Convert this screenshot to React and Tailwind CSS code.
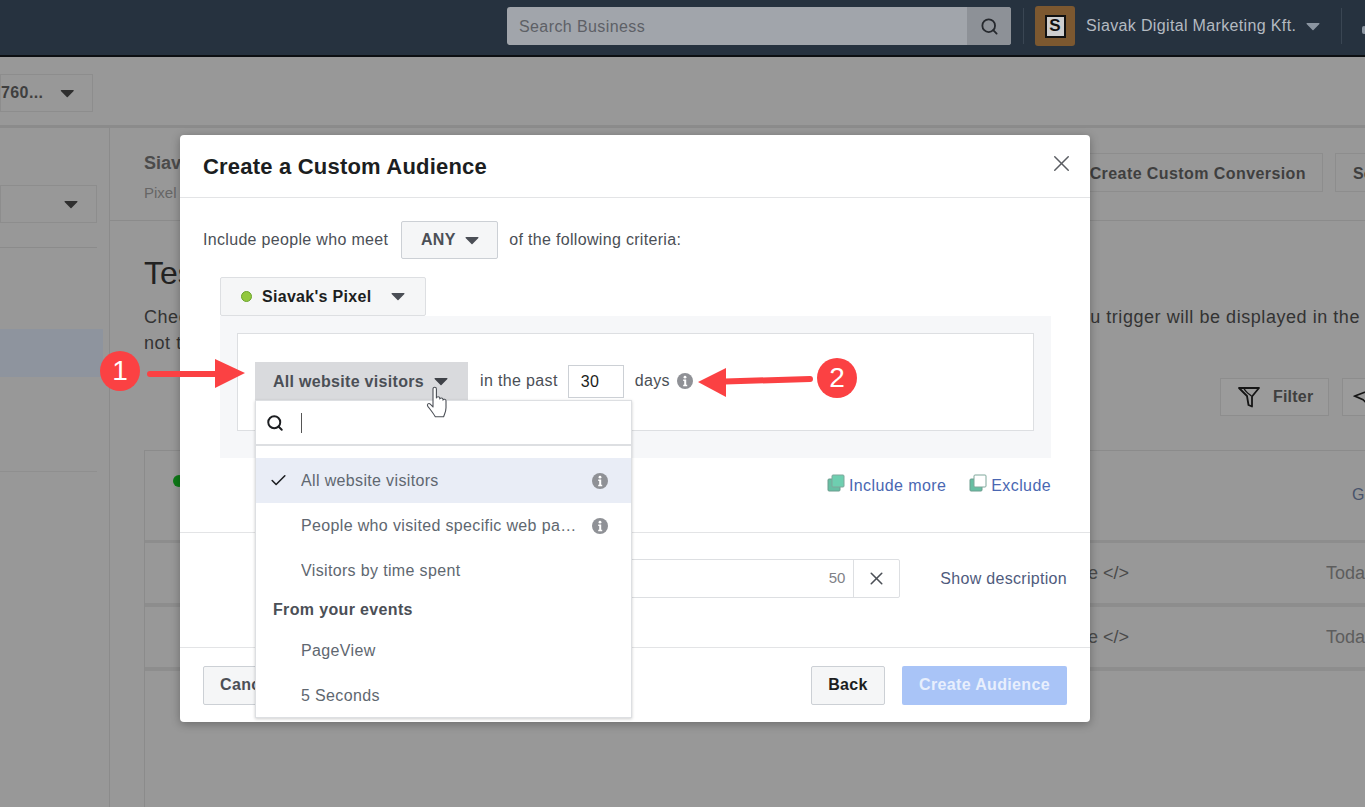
import React from "react";
import { Search, X, Check } from "lucide-react";

const font = { fontFamily: '"Liberation Sans", Arial, sans-serif' };

function Caret({ className = "" }) {
  return (
    <svg viewBox="0 0 14 9" className={className} fill="currentColor">
      <path d="M1 1h12a.6.6 0 0 1 .4 1L7.5 8a.7.7 0 0 1-1 0L.6 2A.6.6 0 0 1 1 1z" />
    </svg>
  );
}

function Info({ className = "" }) {
  return (
    <svg viewBox="0 0 16 16" className={className}>
      <circle cx="8" cy="8" r="8" fill="#8f9196" />
      <circle cx="8" cy="4.2" r="1.4" fill="#fff" />
      <path d="M6.2 6.6h3v5.2h1v1.4H6.2v-1.4h1V8H6.2z" fill="#fff" />
    </svg>
  );
}

function Stack({ className = "", front = "#6ecfb0" }) {
  return (
    <svg viewBox="0 0 18 18" className={className}>
      <rect x="1" y="5" width="12" height="12" rx="1" fill="#67bfa3" stroke="#6c9c8e" />
      <rect x="5" y="1" width="12" height="12" rx="1" fill={front} stroke="#7fa79b" />
    </svg>
  );
}

function Row({ children, info, selected }) {
  return (
    <div className={`h-[45px] flex items-center pl-[45px] pr-[23px] text-[16px] tracking-[0.35px] text-[#606770] relative ${selected ? "bg-[#e9edf6]" : ""}`}>
      {selected && <Check className="absolute left-[13px] top-[13px] w-[19px] h-[19px] text-[#1c1e21]" strokeWidth={2} />}
      <span className="flex-1 truncate">{children}</span>
      {info && <Info className="w-[16px] h-[16px] ml-[14px] shrink-0" />}
    </div>
  );
}

function TableRow() {
  return (
    <div className="h-[64px] border-b-[4px] border-[#8d8d8d] flex items-center justify-end text-[18px] text-[#4a4a4a]">
      <span className="mr-[197px]">Code &lt;/&gt;</span>
      <span className="w-[39px] overflow-hidden text-[#5d5d5d]">Today</span>
    </div>
  );
}

export default function App() {
  return (
    <div style={font} className="relative w-[1365px] h-[807px] overflow-hidden bg-[#989898]">
      {/* top bar */}
      <div className="h-[57px] bg-[#26323f] border-b-2 border-[#0c0f12] flex items-center pl-[507px] pb-[3px]">
        <div className="w-[504px] h-[38px] shrink-0 rounded-[3px] bg-[#a1a5ab] flex overflow-hidden">
          <div className="flex-1 pl-[12px] pt-[2px] flex items-center text-[16px] tracking-[0.4px] text-[#5d6066]">Search Business</div>
          <div className="w-[44px] bg-[#8d9197] flex items-center justify-center">
            <Search className="w-[19px] h-[19px] text-[#26292e]" strokeWidth={2.3} />
          </div>
        </div>
        <div className="w-px h-[36px] shrink-0 bg-[#3a4653] ml-[12px]" />
        <div className="w-[40px] h-[40px] shrink-0 ml-[11px] rounded-[3px] bg-[#7c5830] flex items-center justify-center">
          <div className="w-[21px] h-[23px] bg-[#cfcfcf] border-2 border-[#111] flex items-center justify-center text-[17px] font-bold text-[#111]">S</div>
        </div>
        <span className="ml-[11px] text-[16px] tracking-[0.35px] text-[#b4bac1] whitespace-nowrap">Siavak Digital Marketing Kft.</span>
        <Caret className="w-[14px] h-[9px] shrink-0 ml-[10px] text-[#8b95a1]" />
        <div className="w-px h-[36px] shrink-0 bg-[#3a4653] ml-[21px]" />
        <div className="w-[4px] h-[8px] ml-[20px] mt-[8px] bg-[#8b95a1] rounded-sm shrink-0" />
      </div>

      {/* sub bar */}
      <div className="h-[71px] border-b-[3px] border-[#8b8b8b] flex items-center pt-[4px]">
        <div className="w-[93px] h-[38px] border border-[#8d8d8d] flex items-center justify-end pr-[17px] gap-[17px] text-[16px] font-bold tracking-[0.4px] text-[#3f3f3f]">
          <span>760...</span>
          <Caret className="w-[15px] h-[9px] text-[#2f2f2f]" />
        </div>
      </div>

      <div className="flex h-[679px]">
        {/* side column */}
        <div className="w-[110px] border-r border-[#8b8b8b] shrink-0 pt-[57px]">
          <div className="w-[97px] h-[38px] border border-[#8d8d8d] flex items-center justify-end pr-[18px]">
            <Caret className="w-[14px] h-[9px] text-[#2f2f2f]" />
          </div>
          <div className="w-[97px] border-b border-[#8b8b8b] mt-[24px]" />
          <div className="w-[103px] h-[48px] bg-[#8e949e] mt-[81px]" />
          <div className="w-[97px] border-b border-[#8f8f8f] mt-[94px]" />
        </div>

        {/* main column */}
        <div className="flex-1 min-w-0">
          <div className="h-[93px] border-b border-[#8b8b8b] pl-[34px] pt-[25px] flex justify-between">
            <div>
              <div className="text-[18px] font-bold text-[#4b4b4b] leading-[20px]">Siav</div>
              <div className="text-[15px] text-[#666] mt-[10px] leading-[20px]">Pixel</div>
            </div>
            <div className="flex gap-[12px] -mr-[60px]">
              <div className="w-[260px] h-[39px] border border-[#8d8d8d] flex items-center justify-end pr-[16px] pt-[2px] text-[16px] font-bold tracking-[0.42px] text-[#3f3f3f]">Create Custom Conversion</div>
              <div className="w-[90px] h-[39px] border border-[#8d8d8d] pl-[17px] pt-[2px] flex items-center text-[16px] font-bold text-[#3f3f3f]">Set up</div>
            </div>
          </div>
          <div className="pl-[34px]">
            <div className="text-[32px] leading-[40px] mt-[32px] text-[#222]">Test Events</div>
            <div className="flex justify-between pr-[5px] mt-[11px] text-[18px] tracking-[0.55px] leading-[26px] text-[#333] whitespace-nowrap">
              <span>Check</span>
              <span>u trigger will be displayed in the</span>
            </div>
            <div className="text-[18px] tracking-[0.55px] leading-[26px] text-[#333]">not triggered</div>
            <div className="flex justify-end gap-[13px] mt-[22px] -mr-[39px]">
              <div className="w-[109px] h-[38px] border border-[#8d8d8d] bg-[#9b9b9b] flex items-center pl-[16px] gap-[12px] text-[16px] font-bold tracking-[0.2px] text-[#3f3f3f]">
                <svg viewBox="0 0 24 24" className="w-[24px] h-[24px]" fill="none" stroke="#151515" strokeWidth="1.8" strokeLinejoin="round">
                  <path d="M2 3h20l-7 8.500V21.500l-3.500-1.500-1.500-9z" />
                  <path d="M7 3.500c1.500 3.500 5 5.500 7.500 7.500" strokeWidth="1.300" />
                </svg>
                Filter
              </div>
              <div className="w-[62px] h-[38px] border border-[#8d8d8d] bg-[#9b9b9b] flex items-center pl-[10px]">
                <svg viewBox="0 0 24 24" className="w-[22px] h-[22px]" fill="none" stroke="#151515" strokeWidth="1.8">
                  <path d="M2 11 22 3l-5 18-6-6z" />
                </svg>
              </div>
            </div>
            <div className="mt-[34px] border-l border-t border-[#8b8b8b] h-[357px]">
              <div className="h-[92px] border-b-[3px] border-[#8d8d8d] flex justify-between pl-[28px] pt-[24px]">
                <div className="w-[12px] h-[12px] rounded-full bg-[#0d7a17]" />
                <span className="mt-[8px] w-[13px] overflow-hidden text-[16px] text-[#48536b]">Go</span>
              </div>
              <TableRow />
              <TableRow />
            </div>
          </div>
        </div>
      </div>

      {/* dialog */}
      <div className="absolute left-[180px] top-[135px] w-[910px] h-[587px] bg-white rounded-[4px] shadow-[0_2px_10px_rgba(0,0,0,0.3)]">
        <div className="h-[63px] border-b border-[#e3e4e6] pl-[23px] pr-[15px] flex items-center justify-between">
          <span className="text-[22px] font-bold tracking-[0.2px] text-[#1c1e21]">Create a Custom Audience</span>
          <X className="w-[27px] h-[27px] text-[#5a5d62] -mt-[6px]" strokeWidth={1.3} />
        </div>

        <div className="h-[335px] border-b border-[#e3e4e6] pt-[23px]">
          <div className="pl-[23px] flex items-center text-[16px] tracking-[0.32px] text-[#4b4f56]">
            <span>Include people who meet</span>
            <div className="ml-[13px] w-[97px] h-[38px] bg-[#f5f6f7] border border-[#ccd0d5] rounded-[2px] flex items-center justify-center gap-[9px] font-bold text-[#4b4f56]">
              ANY
              <Caret className="w-[14px] h-[9px] text-[#4b4f56]" />
            </div>
            <span className="ml-[11px]">of the following criteria:</span>
          </div>

          <div className="ml-[40px] mt-[18px] w-[206px] h-[39px] bg-[#f5f6f7] border border-[#dddfe2] rounded-[2px] flex items-center pl-[20px] text-[16px] font-bold tracking-[0.3px] text-[#1c1e21]">
            <span className="w-[11px] h-[11px] rounded-full bg-[#92c83e] border border-[#6aa32c]" />
            <span className="ml-[10px]">Siavak's Pixel</span>
            <Caret className="w-[14px] h-[9px] ml-[20px] text-[#4b4f56]" />
          </div>

          <div className="ml-[40px] w-[831px] h-[142px] bg-[#f6f7f9] p-[17px]">
            <div className="h-[98px] w-[797px] bg-white border border-[#dddfe2] pl-[17px] pt-[28px] relative">
              <div className="flex items-center text-[16px] tracking-[0.35px] text-[#4b4f56]">
                <div className="w-[213px] h-[38px] pt-[1px] bg-[#d9dadd] flex items-center pl-[18px] font-bold tracking-[0.3px]">
                  All website visitors
                  <Caret className="w-[14px] h-[9px] ml-[10px] text-[#3f4248]" />
                </div>
                <span className="ml-[12px]">in the past</span>
                <div className="ml-[10px] mt-[1px] w-[56px] h-[33px] border border-[#ccd0d5] flex items-center pl-[12px] text-[#1c1e21]">30</div>
                <span className="ml-[11px]">days</span>
                <Info className="w-[16px] h-[16px] ml-[7px]" />
              </div>

              {/* audience dropdown */}
              <div className="absolute left-[17px] top-[66px] w-[377px] h-[318px] bg-white border border-[#dddfe2] shadow-[0_1px_3px_rgba(0,0,0,0.2)] z-10">
                <div className="h-[45px] border-b-2 border-[#dddfe2] flex items-center pl-[10px]">
                  <Search className="w-[18px] h-[18px] text-[#1c1e21]" strokeWidth={2.6} />
                  <span className="w-px h-[20px] bg-[#555] ml-[17px]" />
                </div>
                <div className="pt-[12px]">
                  <Row selected info>All website visitors</Row>
                  <Row info>People who visited specific web pages</Row>
                  <Row>Visitors by time spent</Row>
                  <div className="h-[35px] pl-[17px] pt-[5px] text-[16px] font-bold tracking-[0.35px] text-[#4b4f56]">From your events</div>
                  <Row>PageView</Row>
                  <Row>5 Seconds</Row>
                </div>
              </div>
            </div>
          </div>

          <div className="h-[74px] flex items-start justify-end pr-[39px] pt-[19px] text-[16px] leading-[18px] tracking-[0.4px] text-[#4a67b2]">
            <Stack className="w-[18px] h-[18px] mr-[4px] -mt-[3px]" />
            <span>Include more</span>
            <Stack className="w-[18px] h-[18px] ml-[23px] mr-[4px] -mt-[3px]" front="#ffffff" />
            <span>Exclude</span>
          </div>
        </div>

        <div className="h-[115px] border-b border-[#e3e4e6] pt-[26px] pr-[23px] flex items-start justify-end">
          <div className="w-[500px] h-[39px] border border-[#dddfe2] rounded-[2px] flex items-center justify-end text-[15px] text-[#7f8287]">
            <span className="mr-[8px]">50</span>
            <div className="w-[46px] h-full border-l border-[#dddfe2] flex items-center justify-center">
              <X className="w-[21px] h-[21px] text-[#4b4f56]" strokeWidth={1.8} />
            </div>
          </div>
          <span className="ml-[40px] mt-[8px] text-[16px] tracking-[0.3px] text-[#4f5b7d]">Show description</span>
        </div>

        <div className="h-[74px] pl-[23px] pr-[23px] flex items-center">
          <div className="w-[90px] h-[39px] bg-[#f5f6f7] border border-[#ccd0d5] rounded-[2px] pl-[16px] flex items-center text-[16px] font-bold tracking-[0.35px] text-[#4b4f56]">Cancel</div>
          <div className="ml-auto w-[74px] h-[39px] bg-[#f5f6f7] border border-[#ccd0d5] rounded-[2px] flex items-center justify-center text-[16px] font-bold tracking-[0.35px] text-[#1c1e21]">Back</div>
          <div className="ml-[17px] w-[165px] h-[39px] bg-[#a9c4f7] rounded-[2px] flex items-center justify-center text-[16px] font-bold tracking-[0.35px] text-[#e8effd]">Create Audience</div>
        </div>
      </div>

      {/* tutorial annotations */}
      <div className="absolute left-[100px] top-[351px] w-[40px] h-[40px] rounded-full bg-[#fb4143] flex items-center justify-center text-[28px] text-white">1</div>
      <svg className="absolute left-[146px] top-[358px] w-[100px] h-[32px]" viewBox="0 0 100 32">
        <path d="M4 16h66" stroke="#fb4143" strokeWidth="6" strokeLinecap="round" />
        <path d="M69 1l30 14-30 15z" fill="#fb4143" />
      </svg>
      <div className="absolute left-[817px] top-[358px] w-[40px] h-[40px] rounded-full bg-[#fb4143] flex items-center justify-center text-[28px] text-white">2</div>
      <svg className="absolute left-[697px] top-[367px] w-[118px] h-[30px]" viewBox="0 0 118 30">
        <path d="M28 14.5 113 12" stroke="#fb4143" strokeWidth="6" strokeLinecap="round" />
        <path d="M1 15 29 1v29z" fill="#fb4143" />
      </svg>
      {/* hand cursor */}
      <svg className="absolute left-[426px] top-[386px] w-[24px] h-[34px] z-20" viewBox="0 0 24 34" fill="#fff" stroke="#4b4f56" strokeWidth="1.1" strokeLinejoin="round">
        <path d="M7 3c0-2.4 3.4-2.4 3.4 0v9c.3-1.6 3.2-1.6 3.4 0v1c.3-1.5 3-1.4 3.2.2v1c.4-1.4 3-1.2 3 .6v7c0 4-1.4 6-2.4 9H9.300c-1.500-3-4-6-7.500-10.500-1.300-2 .9-3.600 2.500-2.200L7 21z" />
      </svg>
    </div>
  );
}
